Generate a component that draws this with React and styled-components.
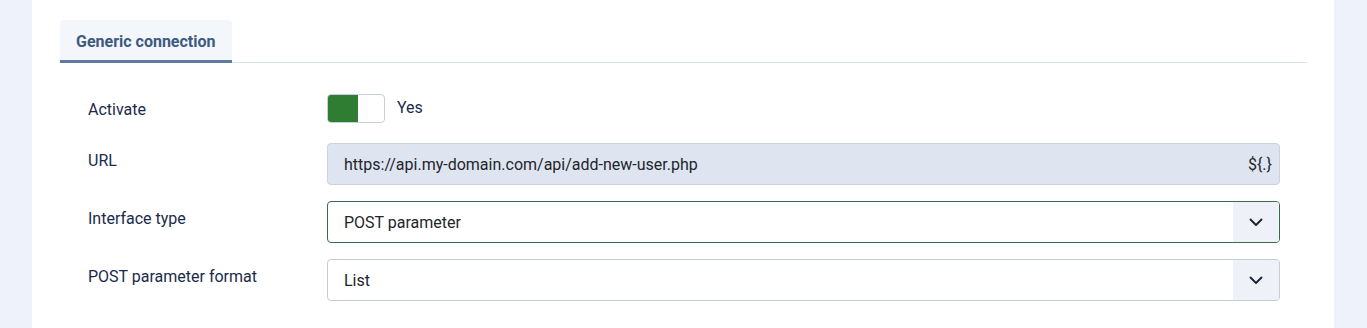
import styled, {createGlobalStyle} from 'styled-components';

const GlobalStyle = createGlobalStyle`
  body {
    margin: 0;
    background: #eef3fb;
    font-family: Roboto, "Liberation Sans", sans-serif;
  }
`;

function Chevron() {
  return (
    <svg width="16" height="16" viewBox="0 0 16 16" fill="none">
      <path d="M2.5 5.5 8 11l5.5-5.5" stroke="#1c2330" strokeWidth="1.9" strokeLinecap="round" strokeLinejoin="round" />
    </svg>
  );
}

function App() {
  return (
    <>
      <GlobalStyle />
      <Page>
        <Panel>
          <TabBar>
            <Tab>Generic connection</Tab>
          </TabBar>
          <Form>
            <Row>
              <Label $top={7}>Activate</Label>
              <SwitchLine>
                <Switch>
                  <SwitchOn />
                </Switch>
                <SwitchText>Yes</SwitchText>
              </SwitchLine>
            </Row>
            <Row>
              <Label>URL</Label>
              <Field $readonly>
                <FieldText>https://api.my-domain.com/api/add-new-user.php</FieldText>
                <Placeholder>{'${.}'}</Placeholder>
              </Field>
            </Row>
            <Row>
              <Label>Interface type</Label>
              <Field $focus>
                <FieldText>POST parameter</FieldText>
                <Arrow>
                  <Chevron />
                </Arrow>
              </Field>
            </Row>
            <Row>
              <Label>POST parameter format</Label>
              <Field>
                <FieldText>List</FieldText>
                <Arrow>
                  <Chevron />
                </Arrow>
              </Field>
            </Row>
          </Form>
        </Panel>
      </Page>
    </>
  );
}

const Page = styled.div`
  padding: 0 33px 0 32px;
  height: 328px;
  box-sizing: border-box;
`;

const Panel = styled.div`
  background: #fff;
  height: 100%;
  padding: 20px 27px 0 28px;
  box-sizing: border-box;
`;

const TabBar = styled.div`
  display: flex;
  border-bottom: 1px solid #dde4ee;
`;

const Tab = styled.div`
  background: #f3f6fa;
  color: #3e5a80;
  font-weight: 700;
  font-size: 16px;
  height: 43px;
  box-sizing: border-box;
  padding: 12px 16px 0 16px;
  border-radius: 4px 4px 0 0;
  border-bottom: 3px solid #5f7ba0;
  margin-bottom: -1px;
`;

const Form = styled.div`
  padding: 31px 27px 0 28px;
  display: flex;
  flex-direction: column;
  gap: 16px;
`;

const Row = styled.div`
  display: grid;
  grid-template-columns: 239px 1fr;
  align-items: start;
  &:nth-child(2) {
    margin-top: 4px;
  }
`;

const Label = styled.div`
  color: #1b2a4a;
  font-size: 16px;
  padding-top: ${p => (p.$top != null ? p.$top : 9)}px;
  line-height: 18px;
`;

const SwitchLine = styled.div`
  display: flex;
  align-items: center;
  gap: 12px;
`;

const Switch = styled.div`
  width: 58px;
  height: 29px;
  box-sizing: border-box;
  border: 1px solid #c7cfda;
  border-radius: 4px;
  background: #fff;
  overflow: hidden;
  display: flex;
`;

const SwitchOn = styled.div`
  width: 30px;
  background: #2e7d32;
`;

const SwitchText = styled.span`
  color: #1b2a4a;
  font-size: 16px;
  margin-top: -2px;
`;

const Field = styled.div`
  height: 42px;
  box-sizing: border-box;
  display: flex;
  align-items: center;
  border-radius: 4px;
  border: 1px solid ${p => (p.$focus ? '#3a6a48' : p.$readonly ? '#c9d2df' : '#c4ccd8')};
  background: ${p => (p.$readonly ? '#dfe5f0' : '#fff')};
  overflow: hidden;
`;

const FieldText = styled.span`
  flex: 1;
  padding-left: 16px;
  color: #22252b;
  font-size: 16px;
`;

const Placeholder = styled.span`
  color: #22252b;
  font-size: 16px;
  padding-right: 7px;
`;

const Arrow = styled.div`
  width: 46px;
  align-self: stretch;
  background: #eef2f8;
  display: flex;
  align-items: center;
  justify-content: center;
`;

export default App;
